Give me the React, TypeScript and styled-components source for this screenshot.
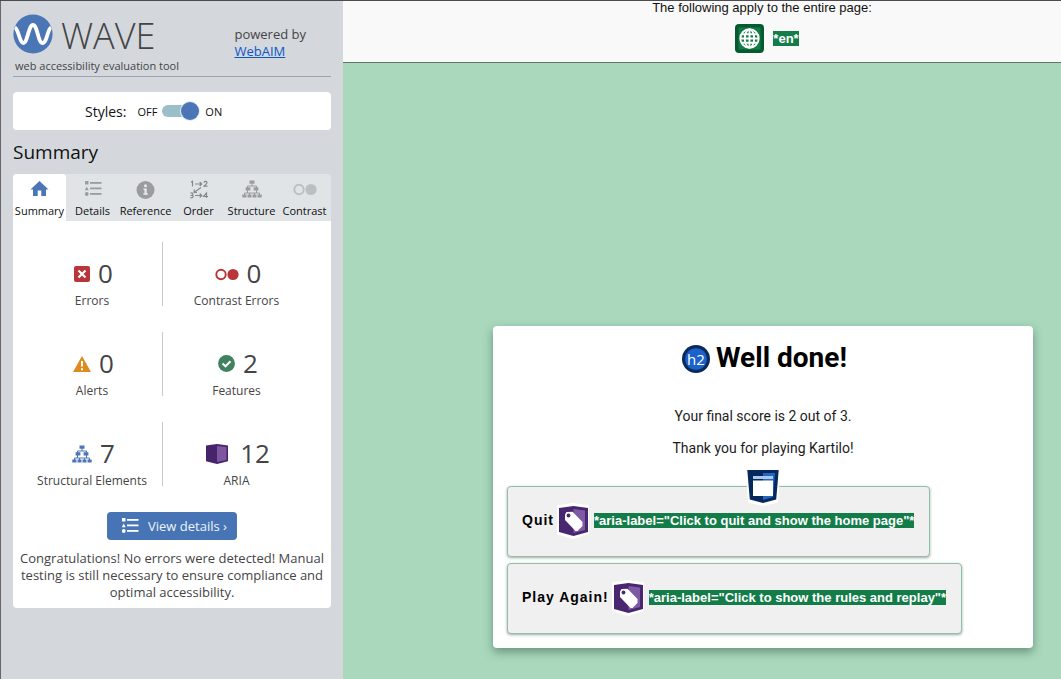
import React, { useState } from "react";
import styled, { createGlobalStyle } from "styled-components";

const GlobalStyle = createGlobalStyle`
  *, *::before, *::after { box-sizing: border-box; }
  html, body { margin: 0; padding: 0; background: #a9d8bc; }
  button { font: inherit; color: inherit; cursor: pointer; }
`;

const Page = styled.div`
  display: flex;
  min-height: 100vh;
  border-top: 1px solid #4a4a50;
`;

const Sidebar = styled.aside`
  flex: 0 0 343px;
  padding: 12px 12px 20px;
  border-left: 1px solid #66666c;
  background: #d4d8dc;
  color: #444446;
  font-family: "Open Sans", sans-serif;
  font-size: 13px;
  line-height: 17px;
`;

const Brand = styled.header`
  display: flex;
  justify-content: space-between;
  align-items: flex-start;
  height: 64px;
  padding-right: 25px;
  border-bottom: 1px solid #9da6ae;
`;

const LogoRow = styled.div`
  display: flex;
  align-items: flex-start;
  gap: 8px;
  height: 45px;
  padding-top: 1px;
`;

const LogoName = styled.span`
  font-size: 36px;
  font-weight: 300;
  line-height: 44px;
`;

const Tagline = styled.div`
  padding-left: 2px;
  font-size: 11px;
  line-height: 16px;
`;

const Powered = styled.p`
  margin: 0;
  padding-top: 13px;
  a { display: block; color: #0b57c4; }
`;

const StylesBox = styled.div`
  display: flex;
  align-items: center;
  gap: 11px;
  height: 38px;
  margin-top: 15px;
  padding-left: 72px;
  border-radius: 4px;
  background: #fff;
  color: #111;
  font-size: 14px;
`;

const SwitchLabel = styled.label`
  display: flex;
  align-items: center;
  gap: 5px;
  font-size: 11px;
`;

const Switch = styled.input`
  position: relative;
  appearance: none;
  width: 38px;
  height: 20px;
  margin: 0;
  &::before {
    content: "";
    position: absolute;
    inset: 4px 3px 4px 0;
    border-radius: 6px;
    background: #9bbfc9;
  }
  &::after {
    content: "";
    position: absolute;
    top: 1px;
    left: 0;
    width: 18px;
    height: 18px;
    border-radius: 50%;
    background: #4a76b6;
    box-shadow: 0 0 0 1px #e1e9f3;
  }
  &:checked::after { left: 19px; }
`;

const SidebarTitle = styled.h1`
  margin: 11px 0 10px;
  color: #111;
  font-size: 19px;
  font-weight: 400;
  line-height: 23px;
`;

const TabList = styled.div`
  display: grid;
  grid-template-columns: repeat(6, 1fr);
  height: 47px;
  border-radius: 4px 4px 0 0;
  background: #e0e4e7;
`;

const Tab = styled.button<{ $active: boolean }>`
  display: flex;
  flex-direction: column;
  align-items: center;
  gap: 4px;
  min-width: 0;
  padding: 5px 0 0;
  border: 0;
  border-radius: 4px 4px 0 0;
  background: ${(p) => (p.$active ? "#fff" : "transparent")};
  color: #111;
  font-size: 11px;
  line-height: 16px;
  white-space: nowrap;
  svg { flex: none; }
`;

const Panel = styled.section`
  padding: 21px 6px 7px;
  border-radius: 0 0 4px 4px;
  background: #fff;
  text-align: center;
`;

const Stats = styled.ul`
  display: grid;
  grid-template-columns: 141px 1fr;
  row-gap: 26px;
  margin: 0;
  padding: 0 15px 0 3px;
  list-style: none;
`;

const Stat = styled.li`
  height: 64px;
  padding-top: 13px;
  &:nth-child(odd) { border-right: 1px solid #c8c8c8; }
`;

const StatValue = styled.div<{ $gap: number }>`
  display: flex;
  justify-content: center;
  align-items: center;
  gap: ${(p) => p.$gap}px;
  padding-left: 3px;
  font-size: 26px;
  line-height: 37px;
`;

const StatLabel = styled.div`
  font-size: 12px;
  line-height: 18px;
`;

const DetailsButton = styled.button`
  display: inline-flex;
  align-items: center;
  gap: 9px;
  height: 28px;
  margin-top: 26px;
  padding: 0 10px 0 14px;
  border: 0;
  border-radius: 4px;
  background: #4674b4;
  color: #eef4fb;
`;

const Message = styled.p`
  margin: 10px 0 0;
`;

const Site = styled.main`
  flex: 1 1 0;
  min-width: 0;
  background: #a9d8bc;
`;

const PageBar = styled.div`
  display: flex;
  flex-direction: column;
  align-items: center;
  height: 62px;
  padding-left: 120px;
  border-bottom: 1px solid #5f7568;
  background: #f9f9f9;
  color: #111;
  font: 13px/14px "Liberation Sans", Arial, sans-serif;
`;

const LangRow = styled.div`
  display: flex;
  align-items: center;
  gap: 9px;
  margin-top: 9px;
  padding-left: 10px;
`;

const Mark = styled.span`
  background: #147c48;
  color: #fff;
  font: bold 13px/15px "Liberation Sans", Arial, sans-serif;
  letter-spacing: normal;
  white-space: nowrap;
`;

const Stage = styled.div`
  display: flex;
  justify-content: center;
  padding: 263px 28px 31px 150px;
`;

const Card = styled.section`
  flex: 0 1 540px;
  min-width: 0;
  padding: 14px;
  border-radius: 4px;
  background: #fff;
  box-shadow: 0 4px 10px rgba(40, 80, 60, 0.5);
  color: #1c1c1c;
  font: 14px/20px Roboto, sans-serif;
  text-align: center;
`;

const CardTitle = styled.h2`
  display: flex;
  justify-content: center;
  align-items: center;
  gap: 5px;
  margin: 0 0 30px;
  padding-left: 2px;
  color: #000;
  font-size: 28px;
  font-weight: 700;
  line-height: 36px;
`;

const CardText = styled.p`
  margin: 0 0 12px;
`;

const Actions = styled.nav`
  position: relative;
  display: flex;
  flex-direction: column;
  align-items: flex-start;
  gap: 6px;
  margin-top: 28px;
`;

const NavBadge = styled.span`
  position: absolute;
  top: -18px;
  left: 50%;
  width: 36px;
  height: 38px;
  margin-left: -18px;
`;

const ActionButton = styled.button`
  display: flex;
  align-items: center;
  height: 71px;
  padding: 0 15px 2px 14px;
  border: 1px solid #8dc0a5;
  border-radius: 4px;
  background: #f0f0f0;
  box-shadow: 0 1px 3px rgba(0, 0, 0, 0.35);
  color: #000;
  font: bold 14px/15px "Liberation Sans", Arial, sans-serif;
  letter-spacing: 1px;
  white-space: nowrap;
  svg { margin: 0 4px 0 2px; flex: none; }
`;

const WaveLogo = () => (
  <svg width="40" height="40" viewBox="0 0 40 40" aria-hidden="true">
    <circle cx="20" cy="20" r="19.6" fill="#4a76b6" />
    <path d="M2 13.500C5.500 15 6.500 29 10.500 29S15.500 11 20 11s5 18 9.500 18S34.500 15 38 13.500" fill="none" stroke="#fff" strokeWidth="3.800" strokeLinecap="butt" />
  </svg>
);

const HomeIcon = () => (
  <svg width="20" height="20" viewBox="0 0 20 20" fill="#4a76b6" aria-hidden="true">
    <path d="M9.500 2 18.500 10.500H16V17h-4.700v-5.500H7.700V17H3v-6.500H.5z" />
  </svg>
);

const ListIcon = ({ color }: { color: string }) => (
  <svg width="18" height="20" viewBox="0 0 18 20" fill={color} aria-hidden="true">
    <rect x="1" y="2" width="3.500" height="3.500" />
    <path d="M2.750 7.500 4.700 11.200H.8z" />
    <circle cx="2.750" cy="15" r="1.900" />
    <rect x="6" y="3" width="11.500" height="1.800" />
    <rect x="6" y="8.500" width="11.500" height="1.800" />
    <rect x="6" y="14" width="11.500" height="1.800" />
  </svg>
);

const InfoIcon = () => (
  <svg width="20" height="20" viewBox="0 0 20 20" aria-hidden="true">
    <circle cx="9.500" cy="11" r="9" fill="#9a9c9e" />
    <circle cx="9.500" cy="6.700" r="1.500" fill="#e8eaec" />
    <path d="M7.500 9.400h3.200v4.800h1.100v1.600H7.400v-1.600h1.100V11h-1z" fill="#e8eaec" />
  </svg>
);

const OrderIcon = () => (
  <svg width="20" height="20" viewBox="0 0 20 20" fill="none" stroke="#858789" strokeWidth="1.200" aria-hidden="true">
    <path d="M2 3.300 3.500 2.300V7.500M6 5h6.500M10.700 3l2 2-2 2M15 3.500c.5-1.600 3-1.300 3 .2 0 1.300-2 2-3 3.500h3.500" />
    <path d="M12 8.500 5 13.500M5.200 10.600V13.500H8" />
    <path d="M1.500 14.300c2-1.200 3.500 1 1.300 2 2.500.5 1.200 3.300-1.500 2.200M6 16.500h6.500M10.700 14.500l2 2-2 2M17.500 19v-5l-3 3.500H19" />
  </svg>
);

const StructureIcon = ({ color }: { color: string }) => (
  <svg width="20" height="20" viewBox="0 0 20 20" aria-hidden="true">
    <path d="M10 4v3M5.500 9.500V7h9v2.500M5.500 11v3M14.500 11v3M2.500 16v-2h5V16M12.500 16v-2h5V16M7.500 14h5" fill="none" stroke={color} strokeWidth="1" />
    <path d="M7.500 1.500h5v3.200h-5zM3.600 8.300h4.800v3.200H3.600zM11.600 8.300h4.800v3.200h-4.800zM.3 15.500h4.200v3H.3zM5.500 15.500h4v3h-4zM10.500 15.500h4v3h-4zM15.500 15.500h4.200v3h-4.200z" fill={color} />
  </svg>
);

const ContrastIcon = ({ color }: { color: string }) => (
  <svg width="24" height="20" viewBox="0 0 24 20" aria-hidden="true">
    <circle cx="6" cy="10.500" r="4.700" fill="none" stroke={color} strokeWidth="1.900" />
    <circle cx="18" cy="10.500" r="5.600" fill={color} />
  </svg>
);

const ErrorIcon = () => (
  <svg width="16" height="16" viewBox="0 0 16 16" aria-hidden="true">
    <rect width="16" height="16" rx="2" fill="#b93539" />
    <path d="m4.500 4.500 7 7m0-7-7 7" stroke="#fff" strokeWidth="2.200" />
  </svg>
);

const AlertIcon = () => (
  <svg width="18" height="18" viewBox="0 0 18 18" aria-hidden="true">
    <path d="M9 1 18 17H0z" fill="#dd8b1c" />
    <path d="M9 6v5.500M9 13.200v2" stroke="#fff" strokeWidth="2" />
  </svg>
);

const FeatureIcon = () => (
  <svg width="17" height="17" viewBox="0 0 17 17" aria-hidden="true">
    <circle cx="8.500" cy="8.500" r="8.400" fill="#3f8160" />
    <path d="m4.500 8.500 3 2.800 5-5" fill="none" stroke="#fff" strokeWidth="2" />
  </svg>
);

const AriaIcon = () => (
  <svg width="22" height="20" viewBox="0 0 22 20" aria-hidden="true">
    <path d="M0 1.500 11 0l11 1.500v15.800L11 20 0 17.300z" fill="#46236b" />
    <path d="M11 2 20.500 3v13L11 18z" fill="#7d57a0" />
  </svg>
);

const GlobeIcon = () => (
  <svg width="29" height="29" viewBox="0 0 29 29" aria-hidden="true">
    <rect width="29" height="29" rx="4" fill="#055a30" />
    <rect x="3.500" y="3.500" width="22" height="22" fill="#157a47" />
    <g fill="none" stroke="#fff" strokeWidth="1.900">
      <circle cx="14.500" cy="14.500" r="9.200" />
      <ellipse cx="14.500" cy="14.500" rx="4.700" ry="9" />
      <path d="M14.500 5.500v18M5.500 14.500h18M7 10.200h15M7 18.800h15" />
    </g>
  </svg>
);

const HeadingIcon = () => (
  <svg width="30" height="30" viewBox="0 0 30 30" role="img" aria-label="Heading level 2">
    <circle cx="15" cy="16" r="14" fill="#0a2a5e" />
    <circle cx="15" cy="16" r="10.800" fill="#1c62c8" />
    <text x="15" y="22" textAnchor="middle" fill="#fff" fontFamily="Open Sans, sans-serif" fontSize="15" fontWeight="400">h2</text>
  </svg>
);

const NavIcon = () => (
  <svg width="36" height="38" viewBox="0 0 36 38" aria-hidden="true">
    <path d="M.5 0h35L33 34.500 18 38 3 34.500z" fill="#fff" />
    <path d="M2.300 2h31.400L31.200 31.500 18 35 4.800 31.500z" fill="#06285c" />
    <path d="M18 5h12l-2 24-10 3z" fill="#2467bd" />
    <path d="M8 8h20v3H8z" fill="#a9c9ee" />
    <path d="M8 12.500h20V28H8z" fill="#fff" />
  </svg>
);

const LabelIcon = () => (
  <svg width="34" height="36" viewBox="0 0 34 36" aria-hidden="true">
    <path d="M1 2.500 17 0l16 2.500V31L17 36 1 31z" fill="#fff" />
    <path d="m3 5 14.500-2L32 5v24l-14.500 4L3 29z" fill="#492770" />
    <path d="M17.500 6 29 7.500V27l-11.500 3z" fill="#7d5aa3" />
    <path d="M9 11.500 10.500 9l6-.3 10 10.300v4L21.500 28h-2L9 17z" fill="#fff" />
    <circle cx="12.500" cy="12.500" r="1.900" fill="#492770" />
  </svg>
);

const tabs = [
  { name: "Summary", icon: <HomeIcon /> },
  { name: "Details", icon: <ListIcon color="#9a9c9e" /> },
  { name: "Reference", icon: <InfoIcon /> },
  { name: "Order", icon: <OrderIcon /> },
  { name: "Structure", icon: <StructureIcon color="#9a9c9e" /> },
  { name: "Contrast", icon: <ContrastIcon color="#bcbfc1" /> },
];

const stats = [
  { label: "Errors", value: 0, icon: <ErrorIcon />, gap: 8 },
  { label: "Contrast Errors", value: 0, icon: <ContrastIcon color="#b93539" />, gap: 8 },
  { label: "Alerts", value: 0, icon: <AlertIcon />, gap: 8 },
  { label: "Features", value: 2, icon: <FeatureIcon />, gap: 8 },
  { label: "Structural Elements", value: 7, icon: <StructureIcon color="#4a76b6" />, gap: 8 },
  { label: "ARIA", value: 12, icon: <AriaIcon />, gap: 12 },
];

const actions = [
  { name: "Quit", note: '*aria-label="Click to quit and show the home page"*' },
  { name: "Play Again!", note: '*aria-label="Click to show the rules and replay"*' },
];

export default function App() {
  const [active, setActive] = useState("Summary");
  return (
    <>
      <GlobalStyle />
      <Page>
        <Sidebar>
          <Brand>
            <div>
              <LogoRow>
                <WaveLogo />
                <LogoName>WAVE</LogoName>
              </LogoRow>
              <Tagline>web accessibility evaluation tool</Tagline>
            </div>
            <Powered>
              powered by <a href="#webaim">WebAIM</a>
            </Powered>
          </Brand>
          <StylesBox>
            <span>Styles:</span>
            <SwitchLabel>
              OFF
              <Switch type="checkbox" role="switch" defaultChecked aria-label="Styles" />
              ON
            </SwitchLabel>
          </StylesBox>
          <SidebarTitle>Summary</SidebarTitle>
          <TabList role="tablist">
            {tabs.map((t) => (
              <Tab key={t.name} type="button" role="tab" aria-selected={active === t.name} $active={active === t.name} onClick={() => setActive(t.name)}>
                {t.icon}
                {t.name}
              </Tab>
            ))}
          </TabList>
          <Panel role="tabpanel">
            <Stats>
              {stats.map((s) => (
                <Stat key={s.label}>
                  <StatValue $gap={s.gap}>
                    {s.icon}
                    <span>{s.value}</span>
                  </StatValue>
                  <StatLabel>{s.label}</StatLabel>
                </Stat>
              ))}
            </Stats>
            <DetailsButton type="button">
              <ListIcon color="#fff" />
              View details ›
            </DetailsButton>
            <Message>
              Congratulations! No errors were detected! Manual testing is still necessary to ensure compliance and optimal accessibility.
            </Message>
          </Panel>
        </Sidebar>
        <Site>
          <PageBar>
            The following apply to the entire page:
            <LangRow>
              <GlobeIcon />
              <Mark>*en*</Mark>
            </LangRow>
          </PageBar>
          <Stage>
            <Card>
              <CardTitle>
                <HeadingIcon />
                Well done!
              </CardTitle>
              <CardText>Your final score is 2 out of 3.</CardText>
              <CardText>Thank you for playing Kartilo!</CardText>
              <Actions>
                {actions.map((a) => (
                  <ActionButton key={a.name} type="button">
                    {a.name}
                    <LabelIcon />
                    <Mark>{a.note}</Mark>
                  </ActionButton>
                ))}
                <NavBadge>
                  <NavIcon />
                </NavBadge>
              </Actions>
            </Card>
          </Stage>
        </Site>
      </Page>
    </>
  );
}
